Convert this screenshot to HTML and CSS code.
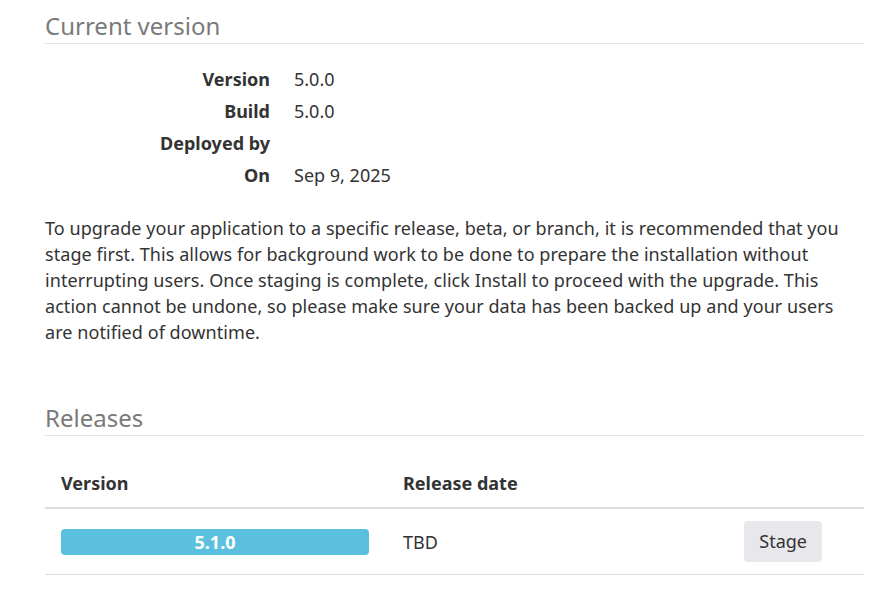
FILE: index.html
```html
<!DOCTYPE html>
<html>
<head>
<meta charset="utf-8">
<link rel="stylesheet" href="styles.css">
</head>
<body>
<div class="page">
  <h2 class="section-title">Current version</h2>
  <dl class="info">
    <dt>Version</dt><dd>5.0.0</dd>
    <dt>Build</dt><dd>5.0.0</dd>
    <dt>Deployed by</dt><dd></dd>
    <dt>On</dt><dd>Sep 9, 2025</dd>
  </dl>
  <p class="intro">To upgrade your application to a specific release, beta, or branch, it is recommended that you stage first. This allows for background work to be done to prepare the installation without interrupting users. Once staging is complete, click Install to proceed with the upgrade. This action cannot be undone, so please make sure your data has been backed up and your users are notified of downtime.</p>
  <h2 class="section-title releases-title">Releases</h2>
  <table class="releases">
    <thead>
      <tr><th class="col-version">Version</th><th class="col-date">Release date</th><th class="col-action"></th></tr>
    </thead>
    <tbody>
      <tr>
        <td class="col-version"><span class="badge">5.1.0</span></td>
        <td class="col-date">TBD</td>
        <td class="col-action"><button class="btn">Stage</button></td>
      </tr>
    </tbody>
  </table>
</div>
</body>
</html>
```
FILE: styles.css
```css
html, body {
  margin: 0;
  padding: 0;
  background: #fff;
}
body {
  font-family: "Noto Sans", "Open Sans", sans-serif;
  font-size: 18px;
  color: #333;
}
.page {
  width: 819px;
  padding-left: 45px;
  padding-top: 9px;
}
.section-title {
  font-size: 24px;
  font-weight: 400;
  color: #7a7a7a;
  margin: 0;
  line-height: 34px;
  padding-bottom: 0;
  border-bottom: 1px solid #e5e5e5;
}
.info {
  display: grid;
  grid-template-columns: 225px 1fr;
  column-gap: 24px;
  row-gap: 0;
  margin: 19px 0 0 0;
}
.info dt {
  font-weight: 700;
  text-align: right;
  line-height: 32px;
}
.info dd {
  margin: 0;
  line-height: 32px;
  min-height: 32px;
}
.intro {
  line-height: 26px;
  letter-spacing: 0.06px;
  margin: 24px 0 0 0;
}
.releases-title {
  margin-top: 56px;
}
.releases {
  width: 100%;
  border-collapse: collapse;
  margin-top: 23px;
}
.releases th {
  text-align: left;
  font-weight: 700;
  padding: 12px 16px;
  line-height: 24px;
  border-bottom: 2px solid #ddd;
}
.releases td {
  padding: 12px 16px;
  line-height: 24px;
  border-bottom: 1px solid #ddd;
  vertical-align: middle;
}
.col-version { width: 310px; }
.col-date { width: auto; }
.col-action { text-align: right; padding-right: 42px !important; }
.badge {
  display: block;
  width: 308px;
  height: 26px;
  line-height: 26px;
  background: #5bc0de;
  color: #fff;
  font-weight: 700;
  text-align: center;
  border-radius: 4px;
}
.btn {
  font-family: inherit;
  font-size: 18px;
  color: #333;
  background: #e8e8ec;
  border: none;
  border-radius: 4px;
  padding: 0 15px;
  height: 41px;
  line-height: 41px;
}
```
